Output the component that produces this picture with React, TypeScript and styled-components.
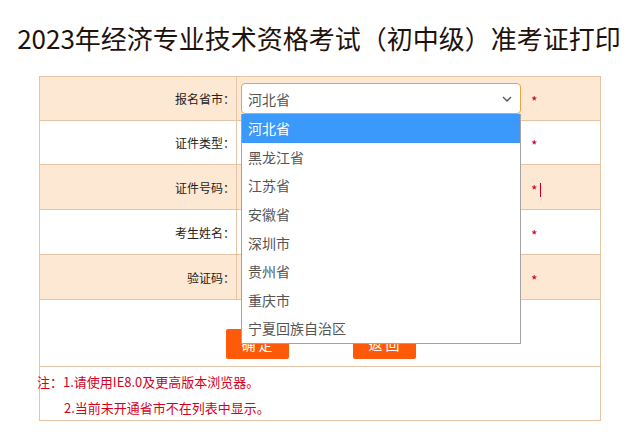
import React from "react";
import styled, { createGlobalStyle } from "styled-components";

const Global = createGlobalStyle`
  html, body { margin: 0; padding: 0; background: #fff; }
  body { font-family: "Noto Sans CJK SC", "Noto Sans", sans-serif; }
  * { box-sizing: border-box; }
`;

const Page = styled.div`
  width: 629px;
  padding-bottom: 20px;
`;

const Title = styled.h1`
  margin: 0;
  height: 76px;
  padding: 0 0 0 9px;
  display: flex;
  align-items: flex-start;
  justify-content: center;
  padding-top: 19px;
  font-size: 26px;
  font-weight: 400;
  line-height: 38px;
  color: #1e120c;
  white-space: nowrap;
  letter-spacing: 0;
`;

const Table = styled.div`
  margin-left: 39px;
  width: 562px;
  border: 1px solid #e6c3a5;
  display: flex;
  flex-direction: column;
`;

const Row = styled.div<{ $alt?: boolean; $h: number }>`
  display: grid;
  grid-template-columns: 197px 1fr;
  height: ${(p) => p.$h}px;
  background: ${(p) => (p.$alt ? "#fde8d3" : "#ffffff")};
  border-bottom: 1px solid #e6c3a5;
`;

const Label = styled.div`
  border-right: 1px solid #e6c3a5;
  display: flex;
  align-items: center;
  justify-content: flex-end;
  padding-right: 1px;
  font-size: 12px;
  color: #222;
`;

const Value = styled.div`
  display: flex;
  align-items: center;
  padding-left: 4px;
  position: relative;
`;

const SelectWrap = styled.div`
  position: relative;
  width: 280px;
  height: 31px;
`;

const SelectBox = styled.div`
  width: 100%;
  height: 100%;
  border: 1.5px solid #e9a445;
  border-radius: 4px;
  background: #fff;
  display: flex;
  align-items: center;
  justify-content: space-between;
  padding: 0 8px 0 6px;
  font-size: 14px;
  color: #555;
`;

const Field = styled.div`
  width: 280px;
  height: 31px;
  border: 1px solid #c8c8c8;
  border-radius: 4px;
  background: #fff;
`;

const Star = styled.span`
  margin-left: 10px;
  margin-top: 5px;
  font-size: 14px;
  color: #c8001e;
  display: flex;
  align-items: center;
`;

const Caret = styled.span`
  display: inline-block;
  width: 1px;
  height: 14px;
  background: #c8001e;
  margin-left: 2px;
`;

const List = styled.div`
  position: absolute;
  left: 0;
  top: 31px;
  width: 280px;
  background: #fff;
  border: 1px solid #a3a3a3;
  border-top: none;
  z-index: 10;
`;

const Option = styled.div<{ $active?: boolean }>`
  height: 28.6px;
  display: flex;
  align-items: center;
  padding-left: 6px;
  font-size: 14px;
  color: ${(p) => (p.$active ? "#fff" : "#555")};
  background: ${(p) => (p.$active ? "#3c99fc" : "#fff")};
`;

const ButtonRow = styled.div`
  height: 67px;
  border-bottom: 1px solid #e6c3a5;
  display: flex;
  justify-content: center;
  align-items: flex-start;
  gap: 64px;
  padding-top: 29px;
  padding-left: 1px;
`;

const Btn = styled.button`
  width: 63px;
  height: 30px;
  border: none;
  border-radius: 2px;
  background: #ff5a0a;
  color: #fff;
  font-family: inherit;
  font-size: 14px;
  padding: 0;
  cursor: pointer;
`;

const Notes = styled.div`
  height: 53px;
  padding-top: 2px;
  font-size: 13px;
  line-height: 26px;
  color: #d6001c;
  margin-left: -3px;
`;

const NoteLine = styled.div<{ $indent?: boolean }>`
  padding-left: ${(p) => (p.$indent ? 27 : 0)}px;
  white-space: nowrap;
`;

const provinces = ["河北省", "黑龙江省", "江苏省", "安徽省", "深圳市", "贵州省", "重庆市", "宁夏回族自治区"];

const Chevron = () => (
  <svg width="10" height="6" viewBox="0 0 10 6">
    <path d="M1 1 L5 5 L9 1" fill="none" stroke="#555" strokeWidth="1.3" />
  </svg>
);

export default function App() {
  return (
    <Page>
      <Global />
      <Title>2023年经济专业技术资格考试（初中级）准考证打印</Title>
      <Table>
        <Row $alt $h={44}>
          <Label>报名省市：</Label>
          <Value>
            <SelectWrap>
              <SelectBox>
                <span>河北省</span>
                <Chevron />
              </SelectBox>
              <List>
                {provinces.map((p, i) => (
                  <Option key={p} $active={i === 0}>
                    {p}
                  </Option>
                ))}
              </List>
            </SelectWrap>
            <Star>*</Star>
          </Value>
        </Row>
        <Row $h={44}>
          <Label>证件类型：</Label>
          <Value>
            <Field />
            <Star>*</Star>
          </Value>
        </Row>
        <Row $alt $h={45}>
          <Label>证件号码：</Label>
          <Value>
            <Field />
            <Star>
              *<Caret />
            </Star>
          </Value>
        </Row>
        <Row $h={45}>
          <Label>考生姓名：</Label>
          <Value>
            <Field />
            <Star>*</Star>
          </Value>
        </Row>
        <Row $alt $h={45}>
          <Label>验证码：</Label>
          <Value>
            <Field />
            <Star>*</Star>
          </Value>
        </Row>
        <ButtonRow>
          <Btn>确 定</Btn>
          <Btn>返 回</Btn>
        </ButtonRow>
        <Notes>
          <NoteLine>注：1.请使用IE8.0及更高版本浏览器。</NoteLine>
          <NoteLine $indent>2.当前未开通省市不在列表中显示。</NoteLine>
        </Notes>
      </Table>
    </Page>
  );
}
